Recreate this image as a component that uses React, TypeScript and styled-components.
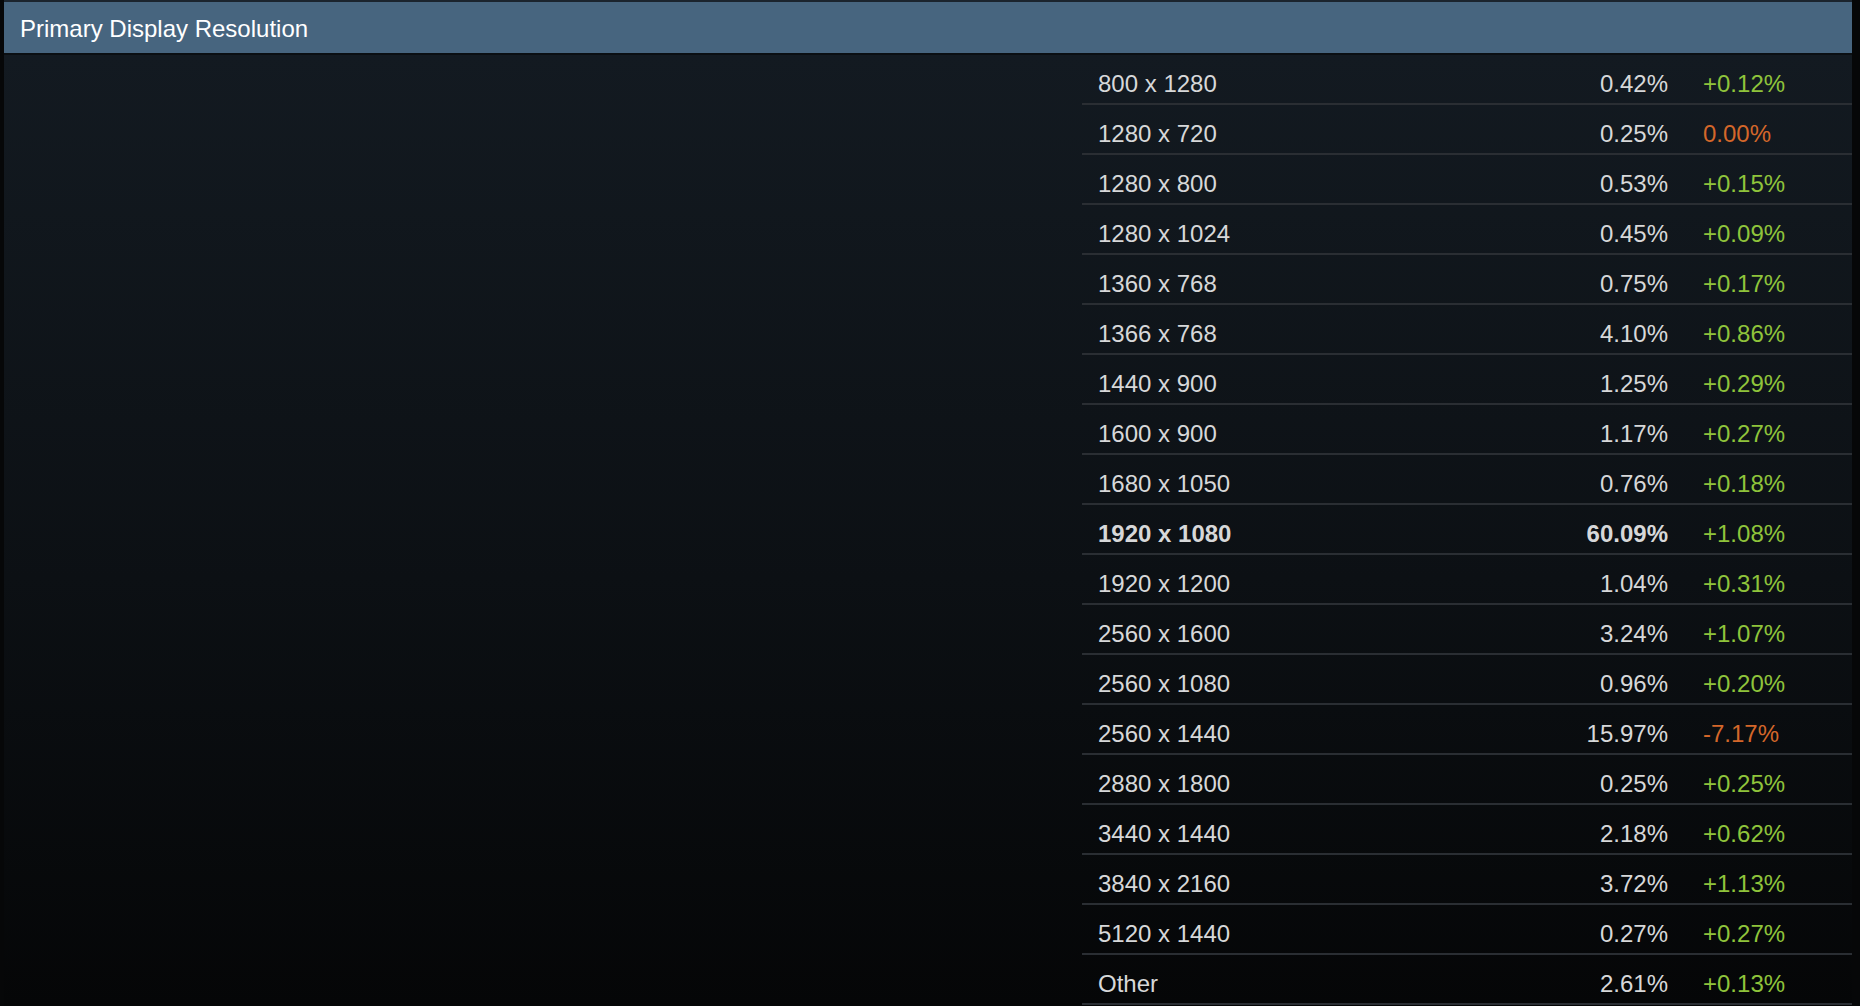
import React from "react";
import styled, { createGlobalStyle } from "styled-components";

const GlobalStyle = createGlobalStyle`
  html, body {
    margin: 0;
    padding: 0;
    background: #060708;
  }
  body {
    font-family: "Liberation Sans", Arial, Helvetica, sans-serif;
  }
`;

const Page = styled.div`
  width: 1860px;
  height: 1006px;
  box-sizing: border-box;
  padding: 0 8px 0 4px;
  background: #060708;
  overflow: hidden;
`;

const Panel = styled.section`
  border-top: 2px solid #1b242e;
  display: flex;
  flex-direction: column;
  height: 1004px;
`;

const Header = styled.h2`
  margin: 0;
  flex: none;
  height: 53px;
  box-sizing: border-box;
  padding: 2px 0 0 16px;
  line-height: 49px;
  font-size: 24px;
  font-weight: 400;
  color: #ffffff;
  background: #47657f;
  border-bottom: 2px solid #0b0f13;
`;

const Body = styled.div`
  flex: 1;
  display: grid;
  grid-template-columns: 1fr 770px;
  align-items: start;
  background: linear-gradient(to bottom, #131a21 0%, #0c1014 55%, #050607 100%);
`;

const ChartArea = styled.div``;

const Table = styled.div`
  display: flex;
  flex-direction: column;
`;

const Row = styled.div<{ $bold?: boolean }>`
  display: grid;
  grid-template-columns: 1fr auto 149px;
  column-gap: 35px;
  height: 50px;
  box-sizing: border-box;
  padding: 10px 0 0 16px;
  line-height: 38px;
  font-size: 24px;
  color: #d7d8d9;
  font-weight: ${(p) => (p.$bold ? 700 : 400)};
  border-bottom: 2px solid #2a2e33;
`;

const Name = styled.span``;

const Percent = styled.span`
  text-align: right;
`;

const Change = styled.span<{ $negative: boolean }>`
  font-weight: 400;
  color: ${(p) => (p.$negative ? "#d4672a" : "#8fc43b")};
`;

type Item = { name: string; pct: string; change: string; bold?: boolean };

const rows: Item[] = [
  { name: "800 x 1280", pct: "0.42%", change: "+0.12%" },
  { name: "1280 x 720", pct: "0.25%", change: "0.00%" },
  { name: "1280 x 800", pct: "0.53%", change: "+0.15%" },
  { name: "1280 x 1024", pct: "0.45%", change: "+0.09%" },
  { name: "1360 x 768", pct: "0.75%", change: "+0.17%" },
  { name: "1366 x 768", pct: "4.10%", change: "+0.86%" },
  { name: "1440 x 900", pct: "1.25%", change: "+0.29%" },
  { name: "1600 x 900", pct: "1.17%", change: "+0.27%" },
  { name: "1680 x 1050", pct: "0.76%", change: "+0.18%" },
  { name: "1920 x 1080", pct: "60.09%", change: "+1.08%", bold: true },
  { name: "1920 x 1200", pct: "1.04%", change: "+0.31%" },
  { name: "2560 x 1600", pct: "3.24%", change: "+1.07%" },
  { name: "2560 x 1080", pct: "0.96%", change: "+0.20%" },
  { name: "2560 x 1440", pct: "15.97%", change: "-7.17%" },
  { name: "2880 x 1800", pct: "0.25%", change: "+0.25%" },
  { name: "3440 x 1440", pct: "2.18%", change: "+0.62%" },
  { name: "3840 x 2160", pct: "3.72%", change: "+1.13%" },
  { name: "5120 x 1440", pct: "0.27%", change: "+0.27%" },
  { name: "Other", pct: "2.61%", change: "+0.13%" },
];

export default function App() {
  return (
    <>
      <GlobalStyle />
      <Page>
        <Panel>
          <Header>Primary Display Resolution</Header>
          <Body>
            <ChartArea />
            <Table>
              {rows.map((r) => (
                <Row key={r.name} $bold={r.bold}>
                  <Name>{r.name}</Name>
                  <Percent>{r.pct}</Percent>
                  <Change $negative={!r.change.startsWith("+")}>{r.change}</Change>
                </Row>
              ))}
            </Table>
          </Body>
        </Panel>
      </Page>
    </>
  );
}
